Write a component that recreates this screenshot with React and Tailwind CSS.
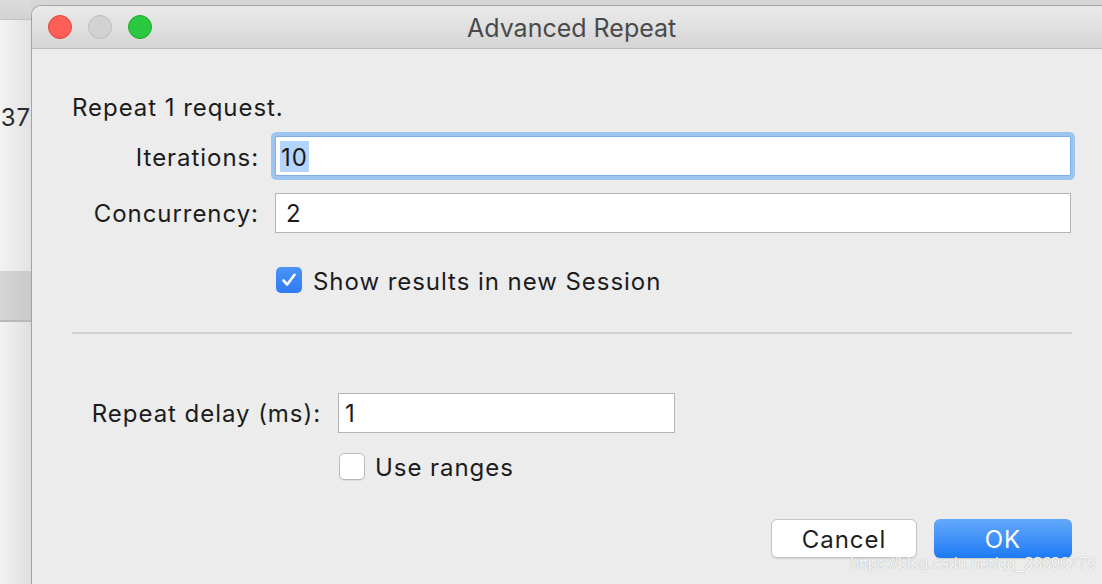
import React from "react";

const font = { fontFamily: "Inter, 'Noto Sans', 'Liberation Sans', sans-serif" };

function Check({ checked }) {
  if (checked) {
    return (
      <div className="w-[26px] h-[26px] rounded-[5px] bg-gradient-to-b from-[#4a93f7] to-[#2f7bf4] flex items-center justify-center">
        <svg width="18" height="18" viewBox="0 0 18 18" fill="none">
          <path d="M3.5 9.5 L7.2 13.5 L14.5 3.8" stroke="white" strokeWidth="2.6" strokeLinecap="round" strokeLinejoin="round" />
        </svg>
      </div>
    );
  }
  return <div className="w-[26px] h-[27px] rounded-[5px] bg-white border border-[#b9b9b9] shadow-[0_1px_0_rgba(0,0,0,0.06)]" />;
}

export default function App() {
  return (
    <div className="w-[1102px] h-[584px] overflow-hidden relative flex bg-[#d6d6d6] text-[#1c1c1c]" style={font}>
      {/* background app strip */}
      <div className="w-[31px] h-full flex flex-col shrink-0">
        <div className="h-[20px] bg-gradient-to-b from-[#dcdcdc] to-[#d2d2d2] border-b border-[#c4c4c4]" />
        <div className="h-[251px] bg-gradient-to-r from-[#f3f3f3] to-[#e2e2e2] flex flex-col overflow-hidden">
          <div className="mt-[83px] h-[30px] flex items-center justify-end text-[24px] leading-[30px] tracking-[0.9px] text-[#2a2a2a] whitespace-nowrap">537</div>
        </div>
        <div className="h-[51px] bg-gradient-to-r from-[#d6d6d6] to-[#c9c9c9] border-b-2 border-[#b8b8b8]" />
        <div className="flex-1 bg-gradient-to-r from-[#f3f3f3] to-[#dedede]" />
      </div>

      {/* dialog window */}
      <div className="mt-[5px] flex-1 flex flex-col rounded-tl-[10px] border-l border-t border-[#a3a3a3] bg-[#ececec] overflow-hidden">
        <div className="h-[43px] shrink-0 relative flex items-center bg-gradient-to-b from-[#ebebeb] to-[#d5d5d5] border-b border-[#bdbdbd]">
          <div className="flex items-center gap-[16px] pl-[16px]">
            <div className="w-[24px] h-[24px] rounded-full bg-[#fe5f57] border border-[#e1453f]" />
            <div className="w-[24px] h-[24px] rounded-full bg-[#d2d2d2] border border-[#bcbcbc]" />
            <div className="w-[24px] h-[24px] rounded-full bg-[#29c840] border border-[#1eaa2c]" />
          </div>
          <div className="absolute left-[435px] top-0 h-full pt-[3px] flex items-center text-[25px] text-[#4a4a4a]">Advanced Repeat</div>
        </div>

        <div className="pl-[40px] flex flex-col w-[1040px] text-[24px] leading-[30px] tracking-[0.95px]">
          <div className="mt-[43px] h-[30px] pt-[2px] flex items-center">Repeat 1 request.</div>

          <div className="mt-[14px] flex items-center gap-[16px]">
            <div className="w-[187px] pt-[3px] flex justify-end">Iterations:</div>
            <div className="w-[796px] h-[40px] bg-white border border-[#7eaeea] rounded-[2px] shadow-[0_0_0_4px_#9ec5f0] flex items-center pl-[4px]">
              <span className="bg-[#b4d5fb] h-[31px] pt-[3px] flex items-center px-[1px]">10</span>
            </div>
          </div>

          <div className="mt-[17px] flex items-center gap-[16px]">
            <div className="w-[187px] pt-[2px] flex justify-end">Concurrency:</div>
            <div className="w-[796px] h-[40px] bg-white border border-[#b4b4b4] flex items-center pl-[10px] pt-[2px]">2</div>
          </div>

          <div className="mt-[32px] h-[30px] pl-[204px] flex items-center gap-[11px]">
            <Check checked />
            <span className="pt-[3px]">Show results in new Session</span>
          </div>

          <div className="mt-[37px] h-[2px] w-[1000px] bg-[#d3d3d3]" />

          <div className="mt-[59px] flex items-center gap-[17px]">
            <div className="w-[249px] pt-[2px] flex justify-end">Repeat delay (ms):</div>
            <div className="w-[337px] h-[40px] bg-white border border-[#b4b4b4] flex items-center pl-[6px] pt-[2px]">1</div>
          </div>

          <div className="mt-[18px] h-[30px] pl-[267px] flex items-center gap-[10px]">
            <Check checked={false} />
            <span className="pt-[3px]">Use ranges</span>
          </div>

          <div className="mt-[38px] w-[1000px] flex justify-end gap-[17px]">
            <div className="w-[146px] h-[39px] pt-[2px] rounded-[6px] bg-white border border-[#c6c6c6] shadow-[0_1px_1px_rgba(0,0,0,0.12)] flex items-center justify-center text-[#1f1f1f]">Cancel</div>
            <div className="w-[138px] h-[39px] pt-[2px] rounded-[6px] bg-gradient-to-b from-[#62a9fb] to-[#1b7af6] shadow-[0_1px_1px_rgba(0,0,0,0.15)] flex items-center justify-center text-white">OK</div>
          </div>
        </div>
      </div>

      <div className="absolute left-[850px] top-[553px] text-[16px] leading-[22px] text-[#f7f7f7] [text-shadow:0_0_1px_#9a9a9a] whitespace-nowrap" style={{ fontFamily: "'Liberation Sans', Arial, sans-serif" }}>
        https://blog.csdn.net/qq_33696779
      </div>
    </div>
  );
}
